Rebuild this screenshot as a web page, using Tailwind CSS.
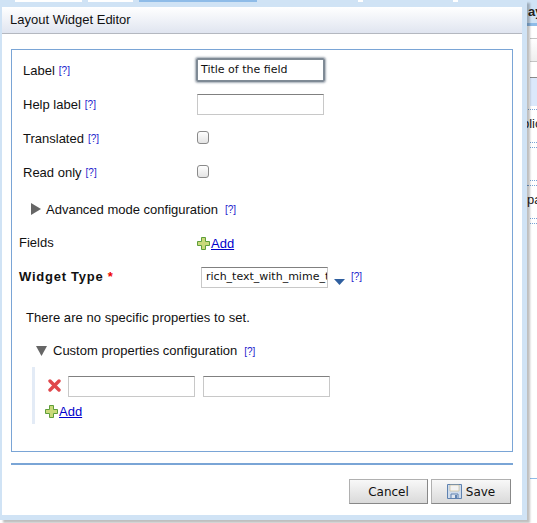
<!DOCTYPE html>
<html><head><meta charset="utf-8"><title>Layout Widget Editor</title>
<script src="https://cdn.jsdelivr.net/npm/@tailwindcss/browser@4"></script></head>
<body class="bg-white overflow-hidden">
<div class="w-[537px] h-[523px] flex font-['Liberation_Sans',sans-serif] text-[13px] text-[#111]">
  <!-- dialog frame -->
  <div class="w-[527px] h-[520px] bg-[#d0e3f5] flex flex-col shrink-0 shadow-[3px_3px_2px_rgba(0,0,0,0.25)] relative z-10">
    <div class="h-[2px] absolute top-0 left-0 w-full flex">
      <div class="ml-[15px] w-[67px] bg-white"></div>
      <div class="ml-[6px] w-[45px] bg-white"></div>
      <div class="ml-[6px] w-[118px] bg-[#8fbce8]"></div>
      <div class="ml-[101px] w-[5px] bg-white"></div>
      <div class="ml-[90px] w-[5px] bg-white"></div>
    </div>
    <div class="mt-[7px] ml-[2px] w-[520px] h-[508px] bg-white flex flex-col">
      <div class="h-[27px] shrink-0 flex items-center pl-[8px] pb-[1px] bg-linear-to-b from-white to-[#e0e5f0] border-b border-[#b4b8c0] text-[13px] text-[#111]">Layout Widget Editor</div>
      <div class="mt-[15px] ml-[9px] w-[502px] h-[403px] shrink-0 border border-[#7aa5d6] pt-[3px] flex flex-col">
        <div class="h-[34px] flex items-center">
          <div class="w-[184px] pl-[11px] pt-[1px] flex items-center gap-[4px]"><span>Label</span><a class="text-[10px] text-[#2222cc]">[?]</a></div>
          <div class="w-[129px] h-[24px] border-[2px] border-[#7f8a95] rounded-[2px] shadow-[0_0_2px_1px_rgba(100,115,130,0.6)] flex items-center pl-[3px] pt-[1px] font-['DejaVu_Sans',sans-serif] text-[11px] text-[#111]">Title of the field</div>
        </div>
        <div class="h-[34px] flex items-center">
          <div class="w-[185px] pl-[11px] pt-[1px] flex items-center gap-[4px]"><span>Help label</span><a class="text-[10px] text-[#2222cc]">[?]</a></div>
          <div class="w-[127px] h-[21px] border border-[#c8c8c8] border-t-[#808080]"></div>
        </div>
        <div class="h-[34px] flex items-center">
          <div class="w-[185px] pl-[11px] pt-[1px] flex items-center gap-[4px]"><span>Translated</span><a class="text-[10px] text-[#2222cc]">[?]</a></div>
          <div class="w-[12px] h-[13px] -mt-[2px] border border-[#8a8a8a] rounded-[3px] bg-linear-to-b from-white to-[#e4e4e4]"></div>
        </div>
        <div class="h-[34px] flex items-center">
          <div class="w-[185px] pl-[11px] pt-[1px] flex items-center gap-[4px]"><span>Read only</span><a class="text-[10px] text-[#2222cc]">[?]</a></div>
          <div class="w-[12px] h-[13px] -mt-[2px] border border-[#8a8a8a] rounded-[3px] bg-linear-to-b from-white to-[#e4e4e4]"></div>
        </div>
        <div class="h-[34px] mt-[3px] flex items-center pl-[19px]">
          <svg class="w-[10px] h-[12px] mr-[5px]" viewBox="0 0 10 12"><path d="M0 0L10 6L0 12Z" fill="#666"/></svg>
          <span class="pt-[1px]">Advanced mode configuration</span><a class="ml-[7px] text-[10px] text-[#2222cc]">[?]</a>
        </div>
        <div class="h-[34px] flex items-center">
          <div class="w-[185px] pl-[7px]">Fields</div>
          <svg class="w-[13px] h-[13px]" viewBox="0 0 13 13"><path d="M4.5 .5h4v4h4v4h-4v4h-4v-4h-4v-4h4z" fill="#c9d97a" stroke="#5f9e3a"/></svg>
          <a class="ml-[1px] pt-[2px] text-[#0000cc] underline">Add</a>
        </div>
        <div class="h-[34px] flex items-center">
          <div class="w-[189px] pl-[7px] font-bold tracking-[0.75px]">Widget Type <span class="text-[#e00]">*</span></div>
          <div class="w-[127px] h-[21px] overflow-hidden whitespace-nowrap border border-[#c8c8c8] border-t-[#808080] flex items-center pl-[4px] font-['DejaVu_Sans',sans-serif] text-[11px]">rich_text_with_mime_type</div>
          <svg class="ml-[6px] mt-[10px] w-[11px] h-[6px]" viewBox="0 0 11 6"><path d="M0 0H11L5.5 6Z" fill="#2f5f9f"/></svg>
          <a class="ml-[6px] -mt-[2px] text-[10px] text-[#2222cc]">[?]</a>
        </div>
        <div class="h-[34px] mt-[7px] flex items-center pl-[14px] tracking-[0.05px]">There are no specific properties to set.</div>
        <div class="h-[32px] flex items-center pl-[24px]">
          <svg class="w-[11px] h-[10px] mr-[6px]" viewBox="0 0 11 10"><path d="M0 0H11L5.5 10Z" fill="#666"/></svg>
          <span>Custom properties configuration</span><a class="ml-[7px] text-[10px] text-[#2222cc]">[?]</a>
        </div>
        <div class="ml-[20px] w-[400px] h-[57px] border-l-[3px] border-[#e3ebf6] flex flex-col pl-[10px]">
          <div class="mt-[9px] h-[21px] flex items-center">
            <svg class="w-[13px] h-[13px] ml-[3px] -mt-[2px]" viewBox="0 0 13 13"><path d="M2 2L11 11M11 2L2 11" stroke="#e0474c" stroke-width="3.4" stroke-linecap="round"/></svg>
            <div class="ml-[7px] w-[127px] h-[21px] border border-[#c8c8c8] border-t-[#808080]"></div>
            <div class="ml-[8px] w-[127px] h-[21px] border border-[#c8c8c8] border-t-[#808080]"></div>
          </div>
          <div class="mt-[5px] flex items-center">
            <svg class="w-[13px] h-[13px]" viewBox="0 0 13 13"><path d="M4.5 .5h4v4h4v4h-4v4h-4v-4h-4v-4h4z" fill="#c9d97a" stroke="#5f9e3a"/></svg>
            <a class="ml-[1px] text-[#0000cc] underline">Add</a>
          </div>
        </div>
      </div>
      <div class="mt-[11px] ml-[9px] w-[502px] h-[2px] bg-[#7aa5d6] shrink-0"></div>
      <div class="mt-[14px] flex justify-end gap-[3px] pr-[11px] font-['DejaVu_Sans',sans-serif] text-[12px]">
        <div class="w-[79px] h-[25px] border border-[#b0b0b0] border-r-[#888] border-b-[#888] bg-linear-to-b from-[#f8f8f8] to-[#dadada] flex items-center justify-center">Cancel</div>
        <div class="w-[80px] h-[25px] border border-[#b0b0b0] border-r-[#888] border-b-[#888] bg-linear-to-b from-[#f8f8f8] to-[#dadada] flex items-center justify-center gap-[4px]">
          <svg class="w-[15px] h-[15px]" viewBox="0 0 15 15"><path d="M.5 .5h14v14h-14z" fill="#cfdcec" stroke="#5f82b0"/><path d="M3 1h9v6H3z" fill="#f3f3f3" stroke="#c9b98a" stroke-width=".6"/><path d="M4 10h7v4.5H4z" fill="#dfe7f0" stroke="#5f82b0"/><path d="M8 11h2v3H8z" fill="#5f82b0"/></svg>
          <span>Save</span>
        </div>
      </div>
    </div>
  </div>
  <!-- page behind -->
  <div class="flex-1 flex flex-col overflow-hidden text-[#222] pl-[3px] bg-white whitespace-nowrap">
    <div class="h-[23px] bg-[#d0e3f5] -ml-[3px] pl-[1px] font-bold leading-[24px]">ay</div>
    <div class="h-[3px] bg-[#8fbce8] -ml-[3px]"></div>
    <div class="h-[12px]"></div>
    <div class="h-[24px] bg-linear-to-b from-white to-[#eeeeee] border-y border-[#c4c4c4]"></div>
    <div class="h-[15px]"></div>
    <div class="h-[29px] bg-[#dbe8fb] border-t border-[#8a8a8a]"></div>
    <div class="h-[3px]"></div>
    <div class="h-[33px] border-t border-dotted border-[#7aa5d6] leading-[28px] -ml-[8px]">blic</div>
    <div class="h-[5px] border-t border-dotted border-[#7aa5d6]"></div>
    <div class="h-[33px] border-t border-dotted border-[#7aa5d6]"></div>
    <div class="h-[5px] border-t border-dotted border-[#7aa5d6]"></div>
    <div class="h-[33px] border-t border-dotted border-[#7aa5d6] leading-[28px] -ml-[3px]">pa</div>
    <div class="h-[5px] border-t border-dotted border-[#7aa5d6]"></div>
    <div class="h-[1px] border-t border-dotted border-[#7aa5d6]"></div>
    <div class="h-[254px]"></div>
    <div class="h-[1px] bg-[#8fbce8]"></div>
  </div>
</div>
</body></html>
